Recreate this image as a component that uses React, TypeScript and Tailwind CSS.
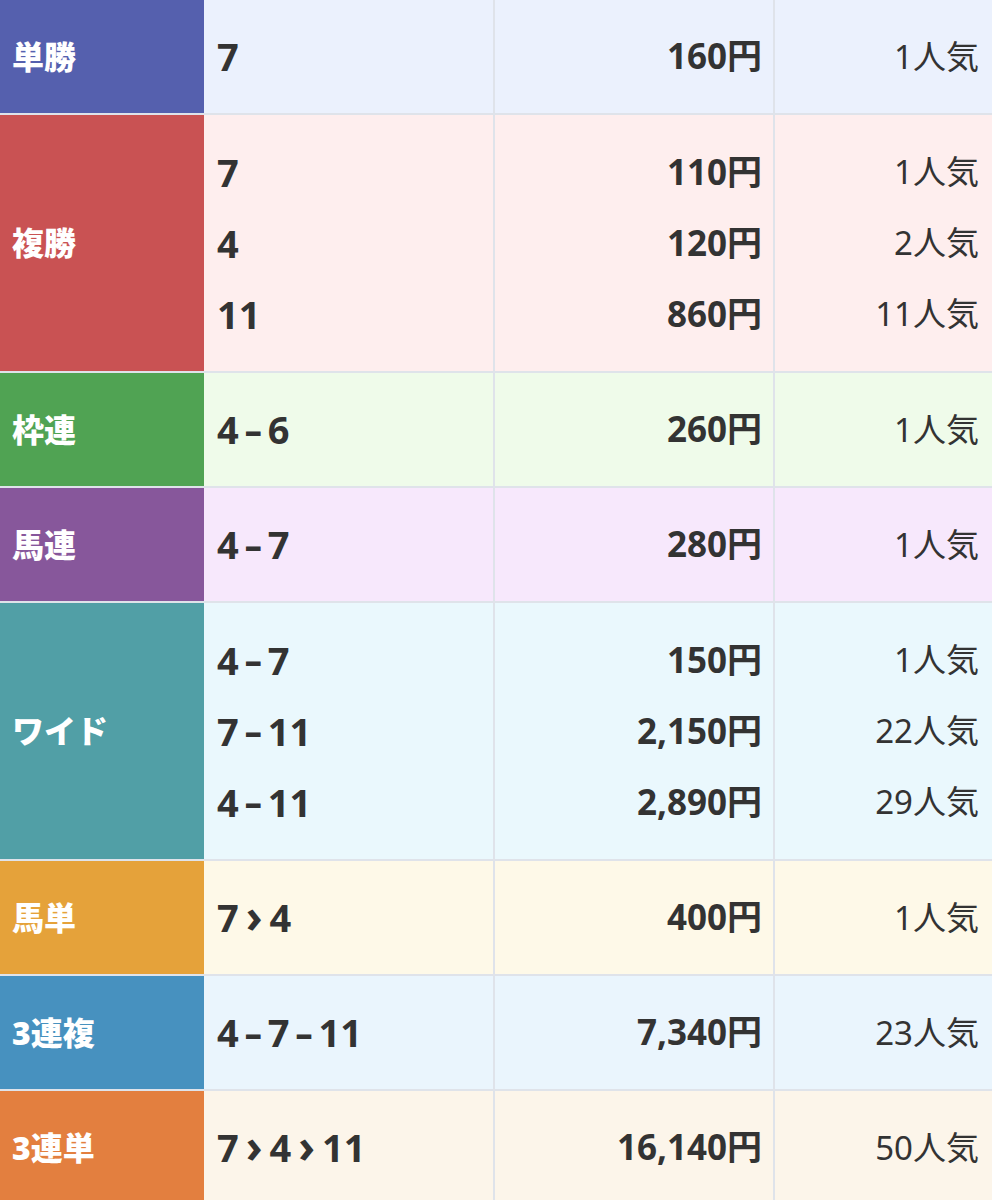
type Line = { combo: string[]; sep?: string; pay: string; pop: string };

interface Bet {
    label: string;
    labelBg: string;
    rowBg: string;
    lines: Line[];
}

const bets: Bet[] = [
    { label: '単勝', labelBg: 'bg-[#5560ae]', rowBg: 'bg-[#ebf1fd]', lines: [{ combo: ['7'], pay: '160円', pop: '1人気' }] },
    {
        label: '複勝',
        labelBg: 'bg-[#c95253]',
        rowBg: 'bg-[#feeeee]',
        lines: [
            { combo: ['7'], pay: '110円', pop: '1人気' },
            { combo: ['4'], pay: '120円', pop: '2人気' },
            { combo: ['11'], pay: '860円', pop: '11人気' },
        ],
    },
    { label: '枠連', labelBg: 'bg-[#50a353]', rowBg: 'bg-[#effbea]', lines: [{ combo: ['4', '6'], sep: '-', pay: '260円', pop: '1人気' }] },
    { label: '馬連', labelBg: 'bg-[#87579b]', rowBg: 'bg-[#f7e8fc]', lines: [{ combo: ['4', '7'], sep: '-', pay: '280円', pop: '1人気' }] },
    {
        label: 'ワイド',
        labelBg: 'bg-[#519fa6]',
        rowBg: 'bg-[#eaf8fd]',
        lines: [
            { combo: ['4', '7'], sep: '-', pay: '150円', pop: '1人気' },
            { combo: ['7', '11'], sep: '-', pay: '2,150円', pop: '22人気' },
            { combo: ['4', '11'], sep: '-', pay: '2,890円', pop: '29人気' },
        ],
    },
    { label: '馬単', labelBg: 'bg-[#e5a23a]', rowBg: 'bg-[#fef9e8]', lines: [{ combo: ['7', '4'], sep: '›', pay: '400円', pop: '1人気' }] },
    { label: '3連複', labelBg: 'bg-[#4791bf]', rowBg: 'bg-[#eaf5fd]', lines: [{ combo: ['4', '7', '11'], sep: '-', pay: '7,340円', pop: '23人気' }] },
    { label: '3連単', labelBg: 'bg-[#e37f3f]', rowBg: 'bg-[#fcf5ea]', lines: [{ combo: ['7', '4', '11'], sep: '›', pay: '16,140円', pop: '50人気' }] },
];

const font = { fontFamily: '"Noto Sans", "Noto Sans CJK JP", sans-serif' };

function Combo({ combo, sep }: { combo: string[]; sep?: string }) {
    return (
        <span className="flex items-center">
            {combo.map((n, i) => (
                <span key={i} className="flex items-center">
                    {i > 0 &&
                        (sep === '›' ? (
                            <span className="mx-[7px] text-[46px] leading-none -translate-y-[3px]">›</span>
                        ) : (
                            <span className="mx-[6px] text-[34px] font-black leading-none">–</span>
                        ))}
                    {n}
                </span>
            ))}
        </span>
    );
}

export default function App() {
    return (
        <div className="w-[992px] h-[1200px] overflow-hidden bg-white" style={font}>
            {bets.map(bet => (
                <div
                    key={bet.label}
                    className={`grid grid-cols-[204px_291px_280px_1fr] border-b-2 border-[#dfe3ea] ${bet.lines.length > 1 ? 'h-[258px]' : 'h-[115px]'} ${bet.rowBg}`}
                >
                    <div className={`flex items-center pl-[12px] text-white font-black text-[32px] ${bet.labelBg}`}>
                        {bet.label}
                    </div>
                    <div className="flex flex-col justify-center pl-[13px] border-r-2 border-[#dfe3ea] text-[#333] font-bold text-[38px]">
                        {bet.lines.map((l, i) => (
                            <div key={i} className="h-[71px] flex items-center">
                                <Combo combo={l.combo} sep={l.sep} />
                            </div>
                        ))}
                    </div>
                    <div className="flex flex-col justify-center pr-[11px] border-r-2 border-[#dfe3ea] text-[#333] font-bold text-[35px]">
                        {bet.lines.map((l, i) => (
                            <div key={i} className="h-[71px] flex items-center justify-end">
                                {l.pay}
                            </div>
                        ))}
                    </div>
                    <div className="flex flex-col justify-center pr-[13px] text-[#333] text-[33px]">
                        {bet.lines.map((l, i) => (
                            <div key={i} className="h-[71px] flex items-center justify-end">
                                {l.pop}
                            </div>
                        ))}
                    </div>
                </div>
            ))}
        </div>
    );
}
